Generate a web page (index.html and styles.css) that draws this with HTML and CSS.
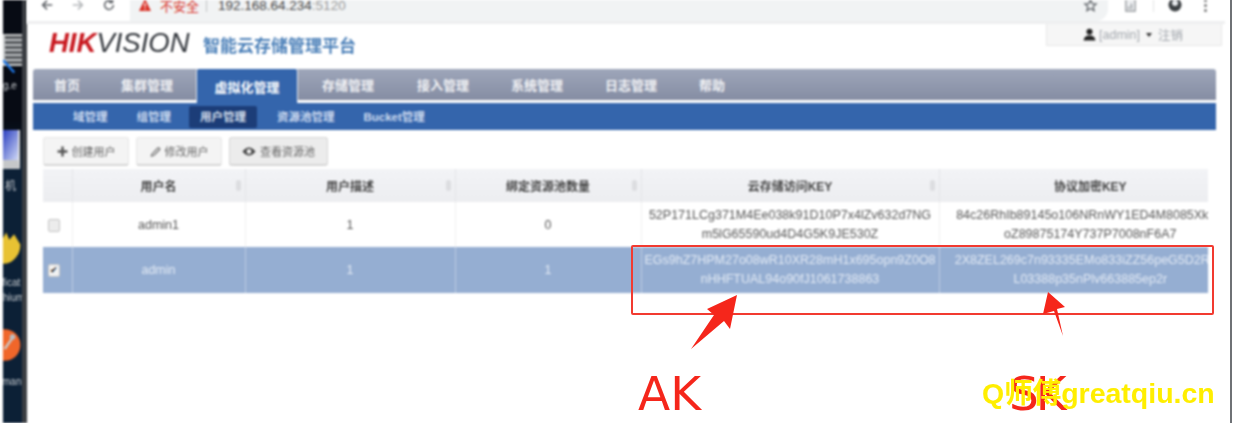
FILE: index.html
```html
<!DOCTYPE html>
<html lang="zh-CN">
<head>
<meta charset="UTF-8" />
<title>智能云存储管理平台</title>
<link rel="stylesheet" href="styles.css">
</head>
<body>

<div class="desktop">
    <div class="desk-item app-grid"></div>
    <svg class="desk-item app-arrow" viewBox="0 0 24 24"><path d="M0 0 L18 20" stroke="#1f78e8" stroke-width="4" fill="none"/></svg>
    <span class="desk-item desk-txt t1">g.e</span>
    <div class="desk-item app-pc"></div>
    <span class="desk-item desk-txt t2">机</span>
    <svg class="desk-item app-yellow" viewBox="0 0 24 46"><path d="M0 8 L4 1 L8 10 L14 3 L22 16 Q22 30 10 38 Q4 41 0 40 Z" fill="#e8c233"/></svg>
    <span class="desk-item desk-txt t3">ficat</span>
    <span class="desk-item desk-txt t4">hium</span>
    <svg class="desk-item app-orange" viewBox="0 0 24 42"><circle cx="2" cy="21" r="20" fill="#f0662a"/><path d="M2 26 L12 12" stroke="#c9c9c9" stroke-width="3"/><circle cx="12" cy="11" r="3.500" fill="#b9bdc2"/></svg>
    <span class="desk-item desk-txt t5">man</span>
</div>

<div class="window">
    <div class="toolbar">
        <div class="nav-icons">
            <svg viewBox="0 0 16 16"><path d="M14 8H3M8 3L3 8l5 5" stroke="#5f6368" stroke-width="1.800" fill="none"/></svg>
            <svg viewBox="0 0 16 16"><path d="M2 8h11M8 3l5 5-5 5" stroke="#b4b7ba" stroke-width="1.800" fill="none"/></svg>
            <svg viewBox="0 0 16 16"><path d="M13 8a5 5 0 1 1-1.500-3.500M12 1v4H8" stroke="#5f6368" stroke-width="1.800" fill="none"/></svg>
        </div>
        <div class="address">
            <svg class="warn" viewBox="0 0 14 14"><path d="M7 1L13 13H1Z" fill="#d93025"/><path d="M7 5v4M7 10v1.500" stroke="#fff" stroke-width="1.300"/></svg>
            <span class="insecure">不安全</span>
            <span class="sep"></span>
            <span class="url">192.168.64.234<em>:5120</em></span>
            <svg class="star" viewBox="0 0 16 16"><path d="M8 2l1.800 4 4.200.4-3.200 2.800 1 4.300L8 11.200 4.200 13.500l1-4.300L2 6.400 6.200 6Z" stroke="#5f6368" stroke-width="1.400" fill="none"/></svg>
        </div>
        <div class="ext-icons">
            <svg class="ext" viewBox="0 0 14 14"><path d="M2 1v12h10V1M5 8v3M8 5v6" stroke="#8b8f93" stroke-width="1.300" fill="#eceef0"/></svg>
            <span class="ext-sep"></span>
            <svg class="avatar" viewBox="0 0 16 16"><circle cx="8" cy="8" r="6.500" fill="#3c4043"/><circle cx="8" cy="6" r="3" fill="#e8eaed"/><path d="M4 4V0M12 4V0" stroke="#3c4043" stroke-width="2"/></svg>
            <span class="dots"><i></i><i></i><i></i></span>
        </div>
    </div>

    <div class="page">
        <div class="header">
            <div class="brand">
                <span class="logo"><b>HIK</b>VISION</span>
                <span class="platform">智能云存储管理平台</span>
            </div>
            <div class="userbox">
                <svg viewBox="0 0 12 12"><circle cx="6" cy="3.500" r="2.800" fill="#222"/><path d="M0.500 11.500Q1 7 6 7t5.500 4.500Z" fill="#222"/></svg>
                <span>[admin]</span><span class="caret"></span><span>注销</span>
            </div>
        </div>

        <div class="tabs">
            <a class="tab tab-home">首页</a>
            <a class="tab tab-cluster">集群管理</a>
            <a class="tab tab-virt active">虚拟化管理</a>
            <a class="tab tab-store">存储管理</a>
            <a class="tab tab-access">接入管理</a>
            <a class="tab tab-system">系统管理</a>
            <a class="tab tab-log">日志管理</a>
            <a class="tab tab-help">帮助</a>
        </div>
        <div class="subnav">
            <a>域管理</a>
            <a>组管理</a>
            <a class="active">用户管理</a>
            <a>资源池管理</a>
            <a>Bucket管理</a>
        </div>

        <div class="actions">
            <button class="btn btn-1">
                <svg viewBox="0 0 10 10"><path d="M5 0.500v9M0.500 5h9" stroke="#555" stroke-width="2.200"/></svg>创建用户
            </button>
            <button class="btn btn-2">
                <svg viewBox="0 0 12 12"><path d="M2 9L8.500 2a1.500 1.500 0 0 1 2 2L4 10.500 1.500 11Z" stroke="#555" stroke-width="1.100" fill="none"/></svg>修改用户
            </button>
            <button class="btn btn-3">
                <svg viewBox="0 0 14 10"><path d="M0.500 5Q7 -3 13.500 5Q7 13 0.500 5Z" fill="#444"/><circle cx="7" cy="5" r="2.400" fill="#eee"/></svg>查看资源池
            </button>
        </div>

        <div class="grid-wrap">
            <table class="grid">
                <colgroup>
                    <col class="c0"><col class="c1"><col class="c2"><col class="c3"><col class="c4"><col class="c5">
                </colgroup>
                <thead>
                    <tr>
                        <th></th>
                        <th class="sort">用户名</th>
                        <th class="sort">用户描述</th>
                        <th class="sort">绑定资源池数量</th>
                        <th class="sort">云存储访问KEY</th>
                        <th>协议加密KEY</th>
                    </tr>
                </thead>
                <tbody>
                    <tr>
                        <td><span class="check"></span></td>
                        <td>admin1</td>
                        <td>1</td>
                        <td>0</td>
                        <td class="key">52P171LCg371M4Ee038k91D10P7x4lZv632d7NG<br>m5lG65590ud4D4G5K9JE530Z</td>
                        <td class="key">84c26RhIb89145o106NRnWY1ED4M8085Xk0C<br>oZ89875174Y737P7008nF6A7</td>
                    </tr>
                    <tr class="selected">
                        <td><span class="check on">✔</span></td>
                        <td>admin</td>
                        <td>1</td>
                        <td>1</td>
                        <td class="key">EGs9hZ7HPM27o08wR10XR28mH1x695opn9Z0O8<br>nHHFTUAL94o90fJ1061738863</td>
                        <td class="key">2X8ZEL269c7n93335EMo833iZZ56peG5D2R1C<br>L03388p35nPlv663885ep2r</td>
                    </tr>
                </tbody>
            </table>
        </div>
    </div>
</div>

<div class="scrollbar"></div>

<!-- annotations drawn over the screenshot -->
<div class="mark-box"></div>
<svg class="mark-arrow ak-arrow" viewBox="0 0 50 56"><path d="M1 55L24 21 17 15 47 1 40 35 34 27Z" fill="#f5261b"/></svg>
<svg class="mark-arrow sk-arrow" viewBox="0 0 26 46"><path d="M23 45L14 20 3 23 8 1 25 16 17 18Z" fill="#f5261b"/></svg>
<span class="mark-text ak">AK</span>
<span class="mark-text sk">SK</span>
<span class="watermark">Q师傅greatqiu.cn</span>

</body>
</html>
```

FILE: styles.css
```css
html, body {
    margin: 0;
    height: 423px;
    overflow: hidden;
}

body {
    display: flex;
    position: relative;
    background: #fff;
    font-family: "Liberation Sans", "Noto Sans CJK SC", sans-serif;
    font-size: 10px;
    color: #555;
}

/* desktop behind the browser */
.desktop {
    position: relative;
    width: 27px;
    flex: none;
    box-sizing: border-box;
    background: linear-gradient(#070b14 0, #070b14 120px, #0c2036 170px);
    border-left: 3px solid #fff;
    border-right: 5px solid #3a3d42;
    filter: blur(0.8px);
    overflow: hidden;
}

.desk-item {
    position: absolute;
    left: 0;
}

.desk-txt {
    color: #c8ccd0;
    font-size: 10px;
    white-space: nowrap;
}

.t1 { top: 80px; }
.t2 { top: 177px; left: 2px; font-size: 11px; }
.t3 { top: 277px; left: -1px; }
.t4 { top: 292px; left: 0; }
.t5 { top: 376px; left: -1px; }

.app-grid {
    top: 34px;
    width: 17px;
    height: 28px;
    background: repeating-linear-gradient(#55585c 0 3px, #bfc2c5 3px 5px);
    border: 2px solid #c9cbcc;
}

.app-arrow {
    top: 60px;
    left: 0;
    width: 15px;
    height: 15px;
}

.app-pc {
    top: 130px;
    width: 15px;
    height: 30px;
    background: linear-gradient(120deg, #2b3fbf, #cfd8f6);
    border-bottom: 9px solid #c5c7c9;
    border-right: 2px solid #ddd;
}

.app-yellow {
    top: 231px;
    width: 19px;
    height: 38px;
}

.app-orange {
    top: 325px;
    width: 19px;
    height: 40px;
}

/* browser window */
.window {
    width: 1198px;
    flex: none;
    filter: blur(0.8px);
}

/* the photo cuts the browser bar off at the top */
.toolbar {
    display: flex;
    align-items: flex-start;
    height: 21px;
    background: #fff;
    border-bottom: 3px solid #eeeff0;
    overflow: hidden;
}

.nav-icons {
    display: flex;
    gap: 17px;
    width: 83px;
    height: 10px;
    padding-left: 13px;
    box-sizing: border-box;
    align-items: center;
}

.nav-icons svg {
    width: 14px;
    height: 14px;
    flex: none;
}

.address {
    display: flex;
    align-items: center;
    width: 978px;
    height: 21px;
    padding: 0 0 11px 8px;
    box-sizing: border-box;
    margin-left: 20px;
    background: #f1f3f4;
    border-radius: 0 0 12px 0;
}

.warn {
    width: 14px;
    height: 14px;
    margin-right: 8px;
}

.insecure {
    color: #d93025;
    font-size: 13px;
}

.sep {
    width: 1px;
    height: 14px;
    margin: 0 11px 0 7px;
    background: #c0c2c4;
}

.url {
    font-size: 13.500px;
    color: #444;
}

.url em {
    font-style: normal;
    color: #999;
}

.star {
    width: 15px;
    height: 15px;
    margin-left: auto;
    margin-right: 10px;
}

.ext-icons {
    display: flex;
    align-items: center;
    flex: 1;
    height: 10px;
    padding-left: 16px;
}

.ext {
    width: 13px;
    height: 15px;
}

.ext-sep {
    width: 1px;
    height: 14px;
    background: #e2e3e4;
    margin: 0 13px 0 16px;
}

.avatar {
    width: 16px;
    height: 16px;
    flex: none;
}

.dots {
    display: flex;
    flex-direction: column;
    gap: 2px;
    margin-left: 21px;
}

.dots i {
    width: 3px;
    height: 3px;
    background: #777;
    border-radius: 50%;
}

.page {
    padding: 0 0 0 6px;
}

.header {
    display: flex;
    justify-content: space-between;
    height: 45px;
}

.brand {
    display: flex;
    align-items: flex-start;
    padding: 4px 0 0 16px;
}

.logo {
    font-size: 27.500px;
    font-style: italic;
    line-height: 30px;
    color: #30343a;
    width: 147px;
    white-space: nowrap;
}

.logo b {
    color: #c8171e;
    font-weight: bold;
}

.platform {
    margin: 7px 0 0 7px;
    font-size: 17px;
    line-height: 24px;
    font-weight: bold;
    color: #4a7fb8;
    white-space: nowrap;
}

.userbox {
    display: flex;
    align-items: center;
    gap: 3px;
    width: 176px;
    height: 22px;
    margin-right: 3px;
    padding-left: 36px;
    box-sizing: border-box;
    background: #f6f6f6;
    border: 1px solid #e8e8e8;
    border-top: none;
    font-size: 12.500px;
    color: #a3a8ae;
}

.userbox svg {
    width: 13px;
    height: 13px;
}

.caret {
    width: 0;
    height: 0;
    margin: 0 3px;
    border: 3px solid transparent;
    border-top: 4px solid #333;
    border-bottom: none;
}

/* main nav */
.tabs {
    display: flex;
    width: 1183px;
    height: 31px;
    background: linear-gradient(#9ea6ba, #858da3);
    border-radius: 3px 3px 0 0;
    position: relative;
}

.tab {
    display: flex;
    align-items: center;
    justify-content: center;
    font-size: 13px;
    font-weight: bold;
    color: #f0f1f4;
}

.tab-home { width: 68px; }
.tab-cluster { width: 92px; margin-right: 4px; }
.tab-virt { width: 100px; }
.tab-store { width: 102px; }
.tab-access { width: 88px; }
.tab-system { width: 100px; }
.tab-log { width: 88px; }
.tab-help { width: 74px; }

.tab.active {
    height: 34px;
    background: #3465ac;
    color: #fff;
    border-radius: 2px 2px 0 0;
    box-shadow: 1px 0 0 #e4e8ee, -1px 0 0 #e4e8ee;
}

.subnav {
    display: flex;
    align-items: center;
    width: 1183px;
    height: 27px;
    margin-top: 3px;
    box-sizing: border-box;
    padding: 0 0 0 29px;
    background: #3465ac;
    position: relative;
    color: #cfdcf0;
    font-size: 11.500px;
    font-weight: bold;
}

.subnav a {
    padding: 4px 11px;
    line-height: 14px;
    margin-right: 7px;
    white-space: nowrap;
}

.subnav a.active {
    background: #1c3d78;
    color: #d8e0ee;
    border-radius: 2px;
    margin-right: 9px;
}

.actions {
    display: flex;
    gap: 7px;
    padding: 7px 0 0 10px;
    height: 32px;
}

.btn {
    display: flex;
    align-items: center;
    justify-content: center;
    gap: 4px;
    height: 29px;
    padding: 0;
    font-family: inherit;
    font-size: 11px;
    color: #666;
    background: #f4f4f4;
    border: 1px solid #e6e6e6;
    border-bottom: 2px solid #d5d5d5;
    border-radius: 3px;
}

.btn svg {
    width: 11px;
    height: 11px;
}

.btn-1 { width: 86px; }
.btn-2 { width: 86px; }
.btn-3 { width: 99px; background: #ececec; border-color: #d6d6d6; }
.btn-3 svg { width: 14px; }

/* table: last column runs on past the scroll edge */
.grid-wrap {
    width: 1165px;
    margin-left: 10px;
    overflow: hidden;
}

.grid {
    width: 1198px;
    border-collapse: collapse;
    table-layout: fixed;
    text-align: center;
}

.c0 { width: 29px; }
.c1 { width: 173px; }
.c2 { width: 210px; }
.c3 { width: 186px; }
.c4 { width: 298px; }
.c5 { width: 302px; }

.grid th {
    position: relative;
    height: 33px;
    padding: 0;
    background: linear-gradient(#f2f3f6, #ecedf0);
    border-left: 1px solid #e4e5e8;
    color: #444;
    font-size: 12px;
    font-weight: bold;
}

.grid th.sort::after {
    content: "";
    position: absolute;
    right: 4px;
    top: 11px;
    width: 5px;
    height: 11px;
    border-radius: 3px;
    background: #dcdde0;
}

.grid td {
    height: 45px;
    padding: 0;
    border-left: 1px solid #f0f0f0;
    font-size: 12.500px;
    color: #555;
    overflow: hidden;
}

.grid th:first-child,
.grid td:first-child {
    border-left: none;
}

.grid td.key {
    font-size: 12.500px;
    line-height: 19px;
    white-space: nowrap;
}

.selected td {
    height: 46px;
    background: #95aed2;
    border-left-color: #bccbe2;
    color: #e4ebf5;
}

.check {
    display: inline-block;
    width: 10px;
    height: 11px;
    margin-right: 6px;
    border: 1px solid #c4c4c4;
    border-radius: 2px;
    background: #ececec;
    vertical-align: middle;
}

.check.on {
    background: #f2f2f2;
    color: #222;
    font-size: 9px;
    line-height: 11px;
}

.scrollbar {
    flex: 1;
    background: #fff;
    border-left: 2px solid #6f7276;
    margin-left: 5px;
}

/* annotations */
.mark-box {
    position: absolute;
    left: 631px;
    top: 245px;
    width: 579px;
    height: 66px;
    border: 2px solid #f23a30;
    border-radius: 2px;
    filter: blur(0.4px);
}

.mark-arrow {
    position: absolute;
    filter: blur(0.4px);
}

.ak-arrow {
    left: 690px;
    top: 294px;
    width: 50px;
    height: 56px;
}

.sk-arrow {
    left: 1040px;
    top: 291px;
    width: 26px;
    height: 46px;
}

.mark-text {
    position: absolute;
    font-family: "DejaVu Sans", sans-serif;
    font-size: 47px;
    line-height: 52px;
    color: #f5261b;
    filter: blur(0.4px);
}

.ak {
    left: 638px;
    top: 368px;
}

.sk {
    left: 1009px;
    top: 368px;
    letter-spacing: -3px;
}

.watermark {
    position: absolute;
    left: 982px;
    top: 377px;
    font-family: "Liberation Sans", "Noto Sans CJK SC", sans-serif;
    font-size: 28.500px;
    font-weight: bold;
    line-height: 32px;
    color: #ffee00;
    white-space: nowrap;
}
```
